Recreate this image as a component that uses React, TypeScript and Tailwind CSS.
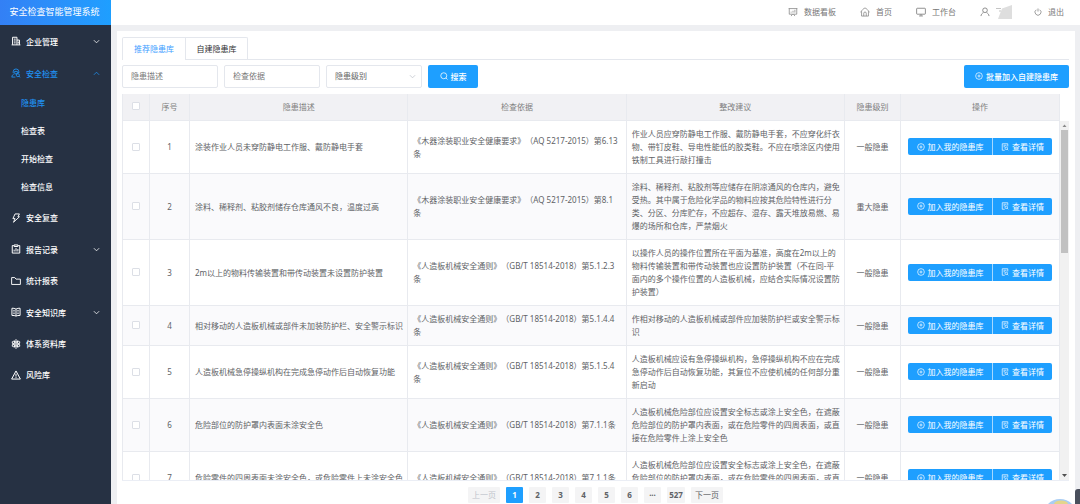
import React from "react";

type IconProps = { className?: string };

function Svg({ className, children, sw = 1.1 }: { className?: string; children: React.ReactNode; sw?: number }) {
  return (
    <svg viewBox="0 0 16 16" fill="none" stroke="currentColor" strokeWidth={sw} className={className} aria-hidden="true">
      {children}
    </svg>
  );
}

const Building = ({ className }: IconProps) => (
  <Svg className={className} sw={1.6}>
    <path d="M2.5 14V2h7v12M9.5 6.5h4V14M1 14.2h14M4.5 5h3M4.5 8h3M4.5 11h3M11.5 9v3" />
  </Svg>
);
const Inspector = ({ className }: IconProps) => (
  <Svg className={className} sw={1.4}>
    <path d="M3.5 8V6a4.5 4.5 0 0 1 9 0v2M5.8 5.5h4.4v2a2.2 2.2 0 0 1-4.4 0zM1.5 14.5c0-3 1.5-4.5 4-5M1 14.5h6" />
    <circle cx="11" cy="11.5" r="2.4" />
    <path d="M12.8 13.2l2 1.8M9 9l4-2" />
  </Svg>
);
const Bolt = ({ className }: IconProps) => (
  <Svg className={className} sw={1.5}>
    <path d="M6.5 1.5h7L11 6h2.500L4 14.800l2.500-5.800H3z" strokeLinejoin="round" />
  </Svg>
);
const Report = ({ className }: IconProps) => (
  <Svg className={className} sw={1.6}>
    <path d="M4.5 2.5H2v12h12v-12h-2.5M5 1.5h6V4H5zM5 12V9M8 12V6.5M11 12V8" />
  </Svg>
);
const Folder = ({ className }: IconProps) => (
  <Svg className={className} sw={1.5}>
    <path d="M1 13.5v-11h5L8 5h7v8.5z" />
  </Svg>
);
const Book = ({ className }: IconProps) => (
  <Svg className={className} sw={1.6}>
    <path d="M8 3.5C6 2 4 2 1.5 2v11.500c2.500 0 4.500 0 6.500 1 2-1 4-1 6.500-1V2C12 2 10 2 8 3.500zM8 3.500v11M3.800 5.500h2M3.800 8h2M3.800 10.500h2M10.200 5.500h2M10.200 8h2M10.200 10.500h2" />
  </Svg>
);
const Atom = ({ className }: IconProps) => (
  <Svg className={className} sw={1.3}>
    <ellipse cx="8" cy="8" rx="3" ry="7" />
    <ellipse cx="8" cy="8" rx="3" ry="7" transform="rotate(60 8 8)" />
    <ellipse cx="8" cy="8" rx="3" ry="7" transform="rotate(120 8 8)" />
    <circle cx="8" cy="8" r="1.5" />
  </Svg>
);
const Warn = ({ className }: IconProps) => (
  <Svg className={className} sw={1.6}>
    <path d="M8 1.5l-7 13h14zM8 6v4.500M8 11.500V13" />
  </Svg>
);
const Chevron = ({ className }: IconProps) => (
  <Svg className={className} sw={1.8}>
    <path d="M2 5l6 6 6-6" />
  </Svg>
);
const Board = ({ className }: IconProps) => (
  <Svg className={className}>
    <path d="M1 2.5h14M2 2.5v9h12v-9M5 14.5l2-3M11 14.5l-2-3M5 9V7.5M8 9V6M11 9V4.5" />
  </Svg>
);
const Home = ({ className }: IconProps) => (
  <Svg className={className}>
    <path d="M1 8.5C3 5 5.5 2.5 8 1.5c2.5 1 5 3.500 7 7M2.500 7v7.500h11V7M6 14.500V10a2 2 0 0 1 4 0v4.500" />
  </Svg>
);
const Monitor = ({ className }: IconProps) => (
  <Svg className={className} sw={1.3}>
    <rect x="1" y="2" width="14" height="9.5" rx="1" />
    <path d="M8 11.5V14M5 14.3h6" />
  </Svg>
);
const User = ({ className }: IconProps) => (
  <Svg className={className} sw={1.3}>
    <circle cx="8" cy="5.2" r="3.7" />
    <path d="M1.5 14.5c.5-3 2-4.700 4-5.500M14.500 14.500c-.5-3-2-4.700-4-5.500" />
  </Svg>
);
const Power = ({ className }: IconProps) => (
  <Svg className={className} sw={1.4}>
    <path d="M4.5 3.5a6 6 0 1 0 7 0M8 1v6" />
  </Svg>
);
const Search = ({ className }: IconProps) => (
  <Svg className={className} sw={1.5}>
    <circle cx="7.5" cy="7.5" r="6" />
    <path d="M12 12l3 3" />
  </Svg>
);
const Plus = ({ className }: IconProps) => (
  <Svg className={className} sw={1.4}>
    <circle cx="8" cy="8" r="6.7" />
    <path d="M8 5v6M5 8h6" />
  </Svg>
);
const Detail = ({ className }: IconProps) => (
  <Svg className={className} sw={1.4}>
    <path d="M13.5 7V1.5h-11v13h5M5 4.5h6M5 7.5h3" />
    <circle cx="10.5" cy="10.5" r="2.5" />
    <path d="M12.3 12.3l2.2 2.2" />
  </Svg>
);

type Item = {
  label: string;
  icon: React.FC<IconProps>;
  arrow?: boolean;
  open?: boolean;
  children?: string[];
};

const menu: Item[] = [
  { label: "企业管理", icon: Building, arrow: true },
  { label: "安全检查", icon: Inspector, arrow: true, open: true, children: ["隐患库", "检查表", "开始检查", "检查信息"] },
  { label: "安全复查", icon: Bolt },
  { label: "报告记录", icon: Report, arrow: true },
  { label: "统计报表", icon: Folder },
  { label: "安全知识库", icon: Book, arrow: true },
  { label: "体系资料库", icon: Atom },
  { label: "风险库", icon: Warn },
];

const topLinks = [
  { label: "数据看板", icon: Board },
  { label: "首页", icon: Home },
  { label: "工作台", icon: Monitor },
];

const guardAdvice =
  "人造板机械危险部位应设置安全标志或涂上安全色，在遮蔽危险部位的防护罩内表面，或在危险零件的四周表面，或直接在危险零件上涂上安全色";

const rows = [
  {
    desc: "涂装作业人员未穿防静电工作服、戴防静电手套",
    basis: "《木器涂装职业安全健康要求》（AQ 5217-2015）第6.13条",
    advice: "作业人员应穿防静电工作服、戴防静电手套，不应穿化纤衣物、带钉皮鞋、导电性能低的胶类鞋。不应在喷涂区内使用铁制工具进行敲打撞击",
    level: "一般隐患",
  },
  {
    desc: "涂料、稀释剂、粘胶剂储存仓库通风不良，温度过高",
    basis: "《木器涂装职业安全健康要求》（AQ 5217-2015）第8.1条",
    advice: "涂料、稀释剂、粘胶剂等应储存在阴凉通风的仓库内，避免受热。其中属于危险化学品的物料应按其危险特性进行分类、分区、分库贮存，不应超存、混存、露天堆放易燃、易爆的场所和仓库，严禁烟火",
    level: "重大隐患",
  },
  {
    desc: "2m以上的物料传输装置和带传动装置未设置防护装置",
    basis: "《人造板机械安全通则》（GB/T 18514-2018）第5.1.2.3条",
    advice: "以操作人员的操作位置所在平面为基准，高度在2m以上的物料传输装置和带传动装置也应设置防护装置（不在同-平面内的多个操作位置的人造板机械，应结合实际情况设置防护装置）",
    level: "一般隐患",
  },
  {
    desc: "相对移动的人造板机械或部件未加装防护栏、安全警示标识",
    basis: "《人造板机械安全通则》（GB/T 18514-2018）第5.1.4.4条",
    advice: "作相对移动的人造板机械或部件应加装防护栏或安全警示标识",
    level: "一般隐患",
  },
  {
    desc: "人造板机械急停操纵机构在完成急停动作后自动恢复功能",
    basis: "《人造板机械安全通则》（GB/T 18514-2018）第5.1.5.4条",
    advice: "人造板机械应设有急停操纵机构，急停操纵机构不应在完成急停动作后自动恢复功能，其复位不应使机械的任何部分重新启动",
    level: "一般隐患",
  },
  {
    desc: "危险部位的防护罩内表面未涂安全色",
    basis: "《人造板机械安全通则》（GB/T 18514-2018）第7.1.1条",
    advice: guardAdvice,
    level: "一般隐患",
  },
  {
    desc: "危险零件的四周表面未涂安全色，或危险零件上未涂安全色",
    basis: "《人造板机械安全通则》（GB/T 18514-2018）第7.1.1条",
    advice: guardAdvice,
    level: "一般隐患",
  },
];

function Sidebar() {
  return (
    <aside className="flex w-[111px] shrink-0 flex-col bg-[#263143]">
      <h1 className="flex h-[25px] items-center justify-center bg-linear-to-r from-[#3380f5] to-[#1e9fff] pr-[2px] pb-[2px] text-[9px] text-white">
        安全检查智能管理系统
      </h1>
      <nav>
        <ul>
          {menu.map((m) => (
            <li key={m.label}>
              <a
                href="#"
                className={`flex items-center gap-[5px] pr-[11px] pl-[11px] font-medium ${m.arrow ? "h-8" : "h-[31px]"} ${m.open ? "text-[#2090f0]" : "text-white"}`}
              >
                <m.icon className="size-[10px] shrink-0" />
                <span className="flex-1">{m.label}</span>
                {m.arrow && <Chevron className={`size-[7px] shrink-0 ${m.open ? "rotate-180" : ""}`} />}
              </a>
              {m.children && (
                <ul className="pb-px">
                  {m.children.map((c, i) => (
                    <li key={c}>
                      <a href="#" className={`flex h-7 items-center pb-px pl-[21px] font-medium ${i === 0 ? "text-[#2090f0]" : "text-white"}`}>
                        {c}
                      </a>
                    </li>
                  ))}
                </ul>
              )}
            </li>
          ))}
        </ul>
      </nav>
    </aside>
  );
}

function Topbar() {
  return (
    <header className="flex h-[25px] shrink-0 items-center justify-end gap-[22px] bg-white pr-4 pb-[2px] text-[#777]">
      <nav className="flex items-center gap-6">
        {topLinks.map((t) => (
          <a key={t.label} href="#" className="flex items-center gap-[6px]">
            <t.icon className="size-[10px]" />
            {t.label}
          </a>
        ))}
        <a href="#" aria-label="用户" className="flex items-center gap-[6px]">
          <User className="size-[10px]" />
          <svg viewBox="0 0 16 14" className="h-[14px] w-4" aria-hidden="true">
            <path d="M0 3.500h5M4 5v2" stroke="#c4c4c4" fill="none" />
            <path d="M6 3.500L16 0v14H2z" fill="#dedede" />
          </svg>
        </a>
      </nav>
      <a href="#" className="flex items-center gap-[6px]">
        <Power className="size-2" />
        退出
      </a>
    </header>
  );
}

const box = "block size-2 appearance-none rounded-[1px] border border-[#dcdfe6] bg-white mx-auto";
const field = "h-[23px] w-24 rounded-[2px] border border-[#e4e7ed] bg-white px-2 pb-[2px] text-[#666] placeholder:text-[#777] outline-none";
const th = "border-r border-b border-[#e8eaef] pb-[2px] font-normal text-[#808080]";
const td = "border-r border-b border-[#e8eaef] pt-[6px] pb-[7px]";

function HazardTable() {
  return (
    <div className="mt-[6px] flex min-h-0 flex-1 overflow-hidden border-b border-[#ebeef5]">
      <div className="min-w-0 flex-1 overflow-hidden">
        <table className="w-full table-fixed border-separate border-spacing-0 border-l border-[#e8eaef] leading-[13px] text-[#606266]">
          <colgroup>
            <col className="w-[27px]" />
            <col className="w-10" />
            <col />
            <col />
            <col />
            <col className="w-14" />
            <col className="w-[159px]" />
          </colgroup>
          <thead>
            <tr className="h-[27px] bg-[#f1f1f4]">
              <th className={th}><input type="checkbox" aria-label="全选" className={box} /></th>
              <th className={th}>序号</th>
              <th className={th}>隐患描述</th>
              <th className={th}>检查依据</th>
              <th className={th}>整改建议</th>
              <th className={th}>隐患级别</th>
              <th className={th}>操作</th>
            </tr>
          </thead>
          <tbody>
            {rows.map((r, i) => (
              <tr key={i} className="even:bg-[#fafafc]">
                <td className={td}><input type="checkbox" aria-label={`选择第${i + 1}行`} className={box} /></td>
                <td className={`${td} text-center`}>{i + 1}</td>
                <td className={`${td} pr-1 pl-[5px]`}>{r.desc}</td>
                <td className={`${td} pr-2 pl-[5px] [text-spacing-trim:space-all]`}>{r.basis}</td>
                <td className={`${td} pr-1 pl-[5px]`}>{r.advice}</td>
                <td className={`${td} text-center`}>{r.level}</td>
                <td className={td}>
                  <div className="mx-auto flex h-[17px] w-36 overflow-hidden rounded-[2px] text-white">
                    <button className="flex w-[85px] items-center justify-center gap-[3px] border-r border-[#a5d8ff] bg-[#1e9fff]">
                      <Plus className="size-2" />
                      加入我的隐患库
                    </button>
                    <button className="flex flex-1 items-center justify-center gap-[3px] bg-[#1e9fff]">
                      <Detail className="size-2" />
                      查看详情
                    </button>
                  </div>
                </td>
              </tr>
            ))}
          </tbody>
        </table>
      </div>
      <div className="mt-[27px] flex w-[9px] flex-col items-center justify-between bg-[#f1f1f1]">
        <svg viewBox="0 0 9 9" className="size-[9px] shrink-0" aria-hidden="true"><path d="M2.5 6h4l-2-2.5z" fill="#8a8a8a" /></svg>
        <div className="w-[7px] flex-1"><div className="h-[36%] bg-[#c1c1c1]" /></div>
        <svg viewBox="0 0 9 9" className="size-[9px] shrink-0" aria-hidden="true"><path d="M2 3h5L4.500 6z" fill="#505050" /></svg>
      </div>
    </div>
  );
}

function Pagination() {
  return (
    <nav aria-label="分页" className="flex h-[23px] shrink-0 items-end justify-center gap-[6px] pb-px font-bold text-[#606266]">
      <button disabled className="h-4 w-8 rounded-[1px] bg-[#f4f4f5] pb-px font-normal text-[#c0c4cc]">上一页</button>
      {["1", "2", "3", "4", "5", "6", "···"].map((p) => (
        <button key={p} className={`h-4 w-[17px] rounded-[1px] pb-px ${p === "1" ? "bg-[#1e9fff] text-white" : "bg-[#f4f4f5]"}`}>
          {p}
        </button>
      ))}
      <button className="h-4 w-[18px] rounded-[1px] bg-[#f4f4f5] pb-px">527</button>
      <button className="h-4 w-8 rounded-[1px] bg-[#f4f4f5] pb-px font-normal">下一页</button>
    </nav>
  );
}

function HelpBadge() {
  return (
    <>
      <div className="absolute right-0 bottom-0 h-[15px] w-[5px] rounded-tl-[3px] bg-[#4a4f5c]" />
      <svg viewBox="0 0 30 6" className="absolute right-[5px] bottom-0 h-[6px] w-[30px]" aria-hidden="true">
        <circle cx="15" cy="18" r="17" fill="#a9cdf3" />
        <ellipse cx="16" cy="6" rx="7" ry="3.5" fill="#e3d58c" />
      </svg>
    </>
  );
}

export default function App() {
  return (
    <div className="relative flex h-screen overflow-hidden bg-[#eeeff2] font-['Noto_Sans','Noto_Sans_CJK_SC',sans-serif] text-[8px] leading-[13px]">
      <Sidebar />
      <div className="flex min-w-0 flex-1 flex-col">
        <Topbar />
        <main className="mt-[6px] mr-[5px] ml-[6px] flex min-h-0 flex-1 flex-col bg-white pt-[6px] pr-[6px] pl-[5px]">
          <div role="tablist" className="flex h-[23px] shrink-0 border-b border-[#e4e7ed]">
            <button role="tab" aria-selected="true" className="-mb-px w-16 rounded-tl-[2px] border border-b-0 border-[#e4e7ed] bg-white pb-[2px] text-[#409eff]">
              推荐隐患库
            </button>
            <button role="tab" aria-selected="false" className="w-[62px] rounded-tr-[2px] border-t border-r border-[#e4e7ed] text-[#303133]">
              自建隐患库
            </button>
          </div>
          <form className="mt-[5px] flex shrink-0 items-center gap-[6px]">
            <input aria-label="隐患描述" placeholder="隐患描述" className={field} />
            <input aria-label="检查依据" placeholder="检查依据" className={field} />
            <div className="grid items-center">
              <select aria-label="隐患级别" className={`${field} appearance-none [grid-area:1/1]`}>
                <option>隐患级别</option>
              </select>
              <Chevron className="pointer-events-none mr-[6px] size-[7px] justify-self-end text-[#c0c4cc] [grid-area:1/1]" />
            </div>
            <button type="button" className="flex h-[23px] w-[50px] items-center justify-center gap-[3px] rounded-[2px] bg-[#1e9fff] pb-px font-medium text-white">
              <Search className="size-2" />
              搜索
            </button>
            <button type="button" className="ml-auto flex h-[23px] w-[105px] items-center justify-center gap-[3px] rounded-[2px] bg-[#1e9fff] pb-px font-medium text-white">
              <Plus className="size-2" />
              批量加入自建隐患库
            </button>
          </form>
          <HazardTable />
          <Pagination />
        </main>
      </div>
      <HelpBadge />
    </div>
  );
}
